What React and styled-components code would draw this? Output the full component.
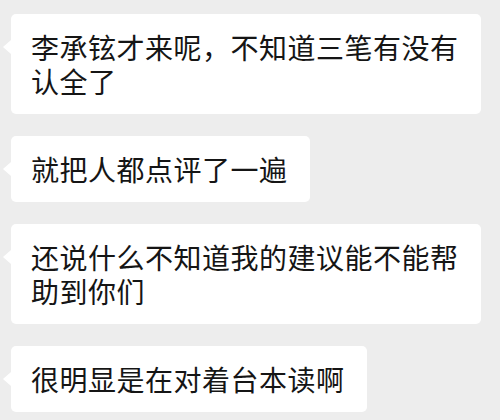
import React from "react";
import styled, { createGlobalStyle } from "styled-components";

const GlobalStyle = createGlobalStyle`
  html, body {
    margin: 0;
    padding: 0;
    background: #ededed;
  }
  body {
    font-family: "Noto Sans CJK SC", "Noto Sans", sans-serif;
  }
`;

const Thread = styled.div`
  width: 500px;
  height: 420px;
  box-sizing: border-box;
  padding: 14px 0 0 11px;
  display: flex;
  flex-direction: column;
  align-items: flex-start;
  gap: 22px;
  overflow: hidden;
  background: #ededed;
`;

const Bubble = styled.div`
  position: relative;
  box-sizing: border-box;
  max-width: 470px;
  padding: 16px 22px 16px 20px;
  background: #ffffff;
  border-radius: 5px;
  color: #151515;
  font-size: 28px;
  line-height: 34px;
  letter-spacing: 0.5px;

  /* little tail pointing at the sender */
  &::before {
    content: "";
    position: absolute;
    left: -8px;
    top: 26px;
    border-style: solid;
    border-width: 7px 8px 7px 0;
    border-color: transparent #ffffff transparent transparent;
  }
`;

const messages = [
  "李承铉才来呢，不知道三笔有没有认全了",
  "就把人都点评了一遍",
  "还说什么不知道我的建议能不能帮助到你们",
  "很明显是在对着台本读啊",
];

export default function App() {
  return (
    <>
      <GlobalStyle />
      <Thread>
        {messages.map((text) => (
          <Bubble key={text}>{text}</Bubble>
        ))}
      </Thread>
    </>
  );
}
